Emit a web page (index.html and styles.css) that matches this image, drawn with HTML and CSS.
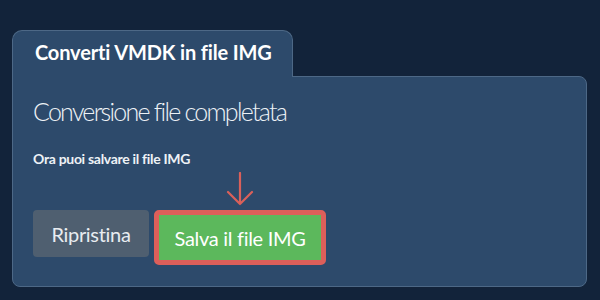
FILE: index.html
```html
<!DOCTYPE html>
<html lang="it">
<head>
<meta charset="utf-8">
<title>Converti VMDK in file IMG</title>
<link rel="stylesheet" href="styles.css">
</head>
<body>
<div class="wrap">
  <div class="tab">Converti VMDK in file IMG</div>
  <div class="panel">
    <h2 class="heading">Conversione file completata</h2>
    <p class="note">Ora puoi salvare il file IMG</p>
    <div class="actions">
      <button class="btn btn-reset">Ripristina</button>
      <div class="save-wrap">
        <svg class="arrow" width="30" height="34" viewBox="0 0 30 34" aria-hidden="true">
          <path d="M15 1 V32 M3 20 L15 32 L27 20" fill="none" stroke="#d9605a" stroke-width="2.2" stroke-linecap="round" stroke-linejoin="round"/>
        </svg>
        <button class="btn btn-save">Salva il file IMG</button>
      </div>
    </div>
  </div>
</div>
</body>
</html>
```

FILE: styles.css
```css
html, body {
  margin: 0;
  padding: 0;
  background: #12233a;
  font-family: Lato, "Open Sans", sans-serif;
  color: #ffffff;
}

.wrap {
  padding: 30px 13px 0 12px;
}

.tab {
  display: inline-block;
  position: relative;
  z-index: 2;
  box-sizing: border-box;
  width: 281px;
  height: 47px;
  margin-bottom: -1px;
  padding: 10px 0 0 22px;
  background: #2d4a6b;
  border: 1px solid #4d6886;
  border-bottom: none;
  border-radius: 10px 10px 0 0;
  font-size: 20px;
  font-weight: 700;
  line-height: 22px;
  letter-spacing: -0.15px;
  color: #ffffff;
}

.panel {
  position: relative;
  z-index: 1;
  box-sizing: border-box;
  height: 211px;
  padding: 19px 20px 20px 20px;
  background: #2d4a6b;
  border: 1px solid #4d6886;
  border-radius: 0 8px 8px 8px;
}

.heading {
  margin: 0;
  font-size: 25px;
  font-weight: 300;
  line-height: 31px;
  letter-spacing: -1.75px;
  color: #eef2f6;
}

.note {
  margin: 23px 0 0 0;
  font-size: 14px;
  font-weight: 700;
  line-height: 18px;
  letter-spacing: -0.3px;
  color: #eef2f6;
}

.actions {
  display: flex;
  align-items: flex-start;
  gap: 5px;
  margin-top: 42px;
}

.btn {
  font-family: Lato, "Open Sans", sans-serif;
  font-size: 20px;
  font-weight: 400;
  line-height: 24px;
  letter-spacing: -0.3px;
  border: none;
  cursor: pointer;
}

.btn-reset {
  box-sizing: border-box;
  width: 116px;
  height: 47px;
  padding: 0;
  background: #4f5f70;
  color: #e8ecf0;
  border-radius: 4px;
}

.save-wrap {
  position: relative;
}

.arrow {
  position: absolute;
  left: 50%;
  bottom: 100%;
  margin-left: -15px;
  margin-bottom: 4px;
}

.btn-save {
  box-sizing: border-box;
  width: 172px;
  height: 55px;
  padding: 0;
  background: #5cb85c;
  color: #ffffff;
  border: 5px solid #dc5f5a;
  border-radius: 5px;
}
```
